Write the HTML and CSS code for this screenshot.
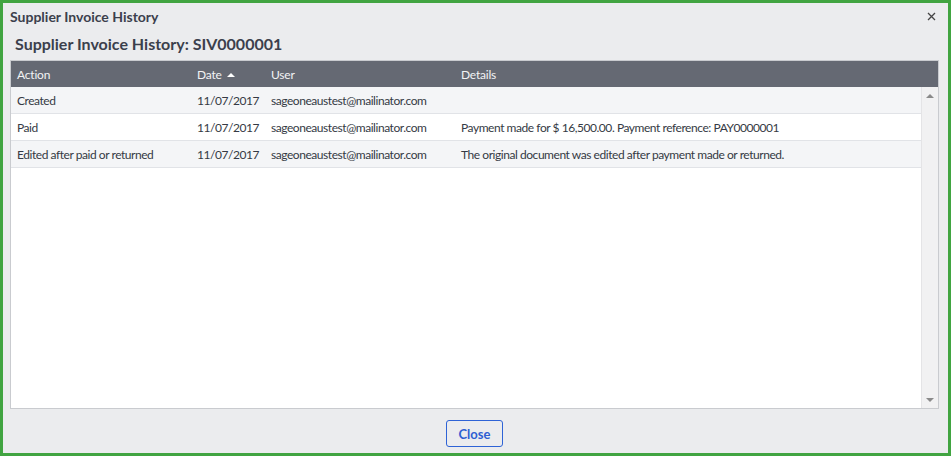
FILE: index.html
```html
<!DOCTYPE html>
<html>
	<head>
		<meta charset="UTF-8">
		<title>Supplier Invoice History</title>
		<link rel="stylesheet" href="styles.css">
	</head>
	<body>
		<div class="dialog">
			<div class="titlebar">
				<span class="title">Supplier Invoice History</span>
				<span class="close-x">
					<svg width="9" height="9" viewBox="0 0 9 9"><path d="M1 1L8 8M8 1L1 8" stroke="#444" stroke-width="1.3"/></svg>
				</span>
			</div>
			<h1 class="heading">Supplier Invoice History: SIV0000001</h1>
			<div class="grid">
				<div class="grid-head">
					<div class="cell">Action</div>
					<div class="cell">Date <span class="sort"></span></div>
					<div class="cell">User</div>
					<div class="cell">Details</div>
				</div>
				<div class="grid-body">
					<div class="rows">
						<div class="row alt">
							<div class="cell">Created</div>
							<div class="cell">11/07/2017</div>
							<div class="cell">sageoneaustest@mailinator.com</div>
							<div class="cell"></div>
						</div>
						<div class="row">
							<div class="cell">Paid</div>
							<div class="cell">11/07/2017</div>
							<div class="cell">sageoneaustest@mailinator.com</div>
							<div class="cell">Payment made for $ 16,500.00. Payment reference: PAY0000001</div>
						</div>
						<div class="row alt">
							<div class="cell">Edited after paid or returned</div>
							<div class="cell">11/07/2017</div>
							<div class="cell">sageoneaustest@mailinator.com</div>
							<div class="cell">The original document was edited after payment made or returned.</div>
						</div>
					</div>
					<div class="scrollbar">
						<span class="arrow up"></span>
						<span class="arrow down"></span>
					</div>
				</div>
			</div>
			<div class="footer">
				<button class="btn">Close</button>
			</div>
		</div>
	</body>
</html>
```

FILE: styles.css
```css
body, h1{margin:0;}
*{box-sizing:border-box;}

.dialog{
	width:951px;
	height:456px;
	border:3px solid #41a441;
	background:#ebecee;
	display:flex;
	flex-direction:column;
	font-family:Lato, "Liberation Sans", sans-serif;
	color:#333;
}

.titlebar{
	height:26px;
	padding:0 10px 0 7px;
	display:flex;
	align-items:center;
	justify-content:space-between;
}
.title{
	font-size:14px;
	font-weight:bold;
	color:#3b404c;
}
.close-x{
	display:flex;
	margin-right:2px;
}

.heading{
	height:31px;
	line-height:30px;
	padding-left:12px;
	font-size:16px;
	font-weight:bold;
	color:#3b404c;
}

.grid{
	flex:1;
	margin:0 9px 0 7px;
	border:1px solid #c9cbcf;
	display:flex;
	flex-direction:column;
	background:#fff;
}
.grid-head, .row{
	display:grid;
	grid-template-columns:180px 74px 190px 1fr;
	font-size:12px;
}
.grid-head{
	height:26px;
	background:#656973;
	color:#f2f3f5;
	align-items:center;
	letter-spacing:-0.2px;
}
.cell{
	padding-left:6px;
	white-space:nowrap;
}
.sort{
	display:inline-block;
	width:0;
	height:0;
	margin-left:2px;
	border-left:4px solid transparent;
	border-right:4px solid transparent;
	border-bottom:4px solid #fff;
	vertical-align:2px;
}

.grid-body{
	flex:1;
	display:flex;
}
.rows{
	flex:1;
}
.row{
	height:27px;
	align-items:center;
	border-bottom:1px solid #e1e3e7;
	color:#353a44;
	background:#fff;
	letter-spacing:-0.45px;
}
.row.alt{
	background:#f4f5f7;
}

.scrollbar{
	width:17px;
	background:#f1f1f2;
	border-left:1px solid #e4e4e6;
	display:flex;
	flex-direction:column;
	justify-content:space-between;
	align-items:center;
	padding:7px 0 6px;
}
.arrow{
	width:0;
	height:0;
	border-left:4px solid transparent;
	border-right:4px solid transparent;
}
.arrow.up{
	border-bottom:4px solid #8a8a8a;
}
.arrow.down{
	border-top:4px solid #8a8a8a;
}

.footer{
	height:44px;
	display:flex;
	justify-content:center;
	padding-top:11px;
}
.btn{
	width:57px;
	height:27px;
	margin-right:2px;
	border:1px solid #2e63d6;
	border-radius:3px;
	background:#ebecee;
	color:#2e5fd2;
	font-family:Lato, "Liberation Sans", sans-serif;
	font-size:13px;
	font-weight:bold;
	padding:0;
}
```
